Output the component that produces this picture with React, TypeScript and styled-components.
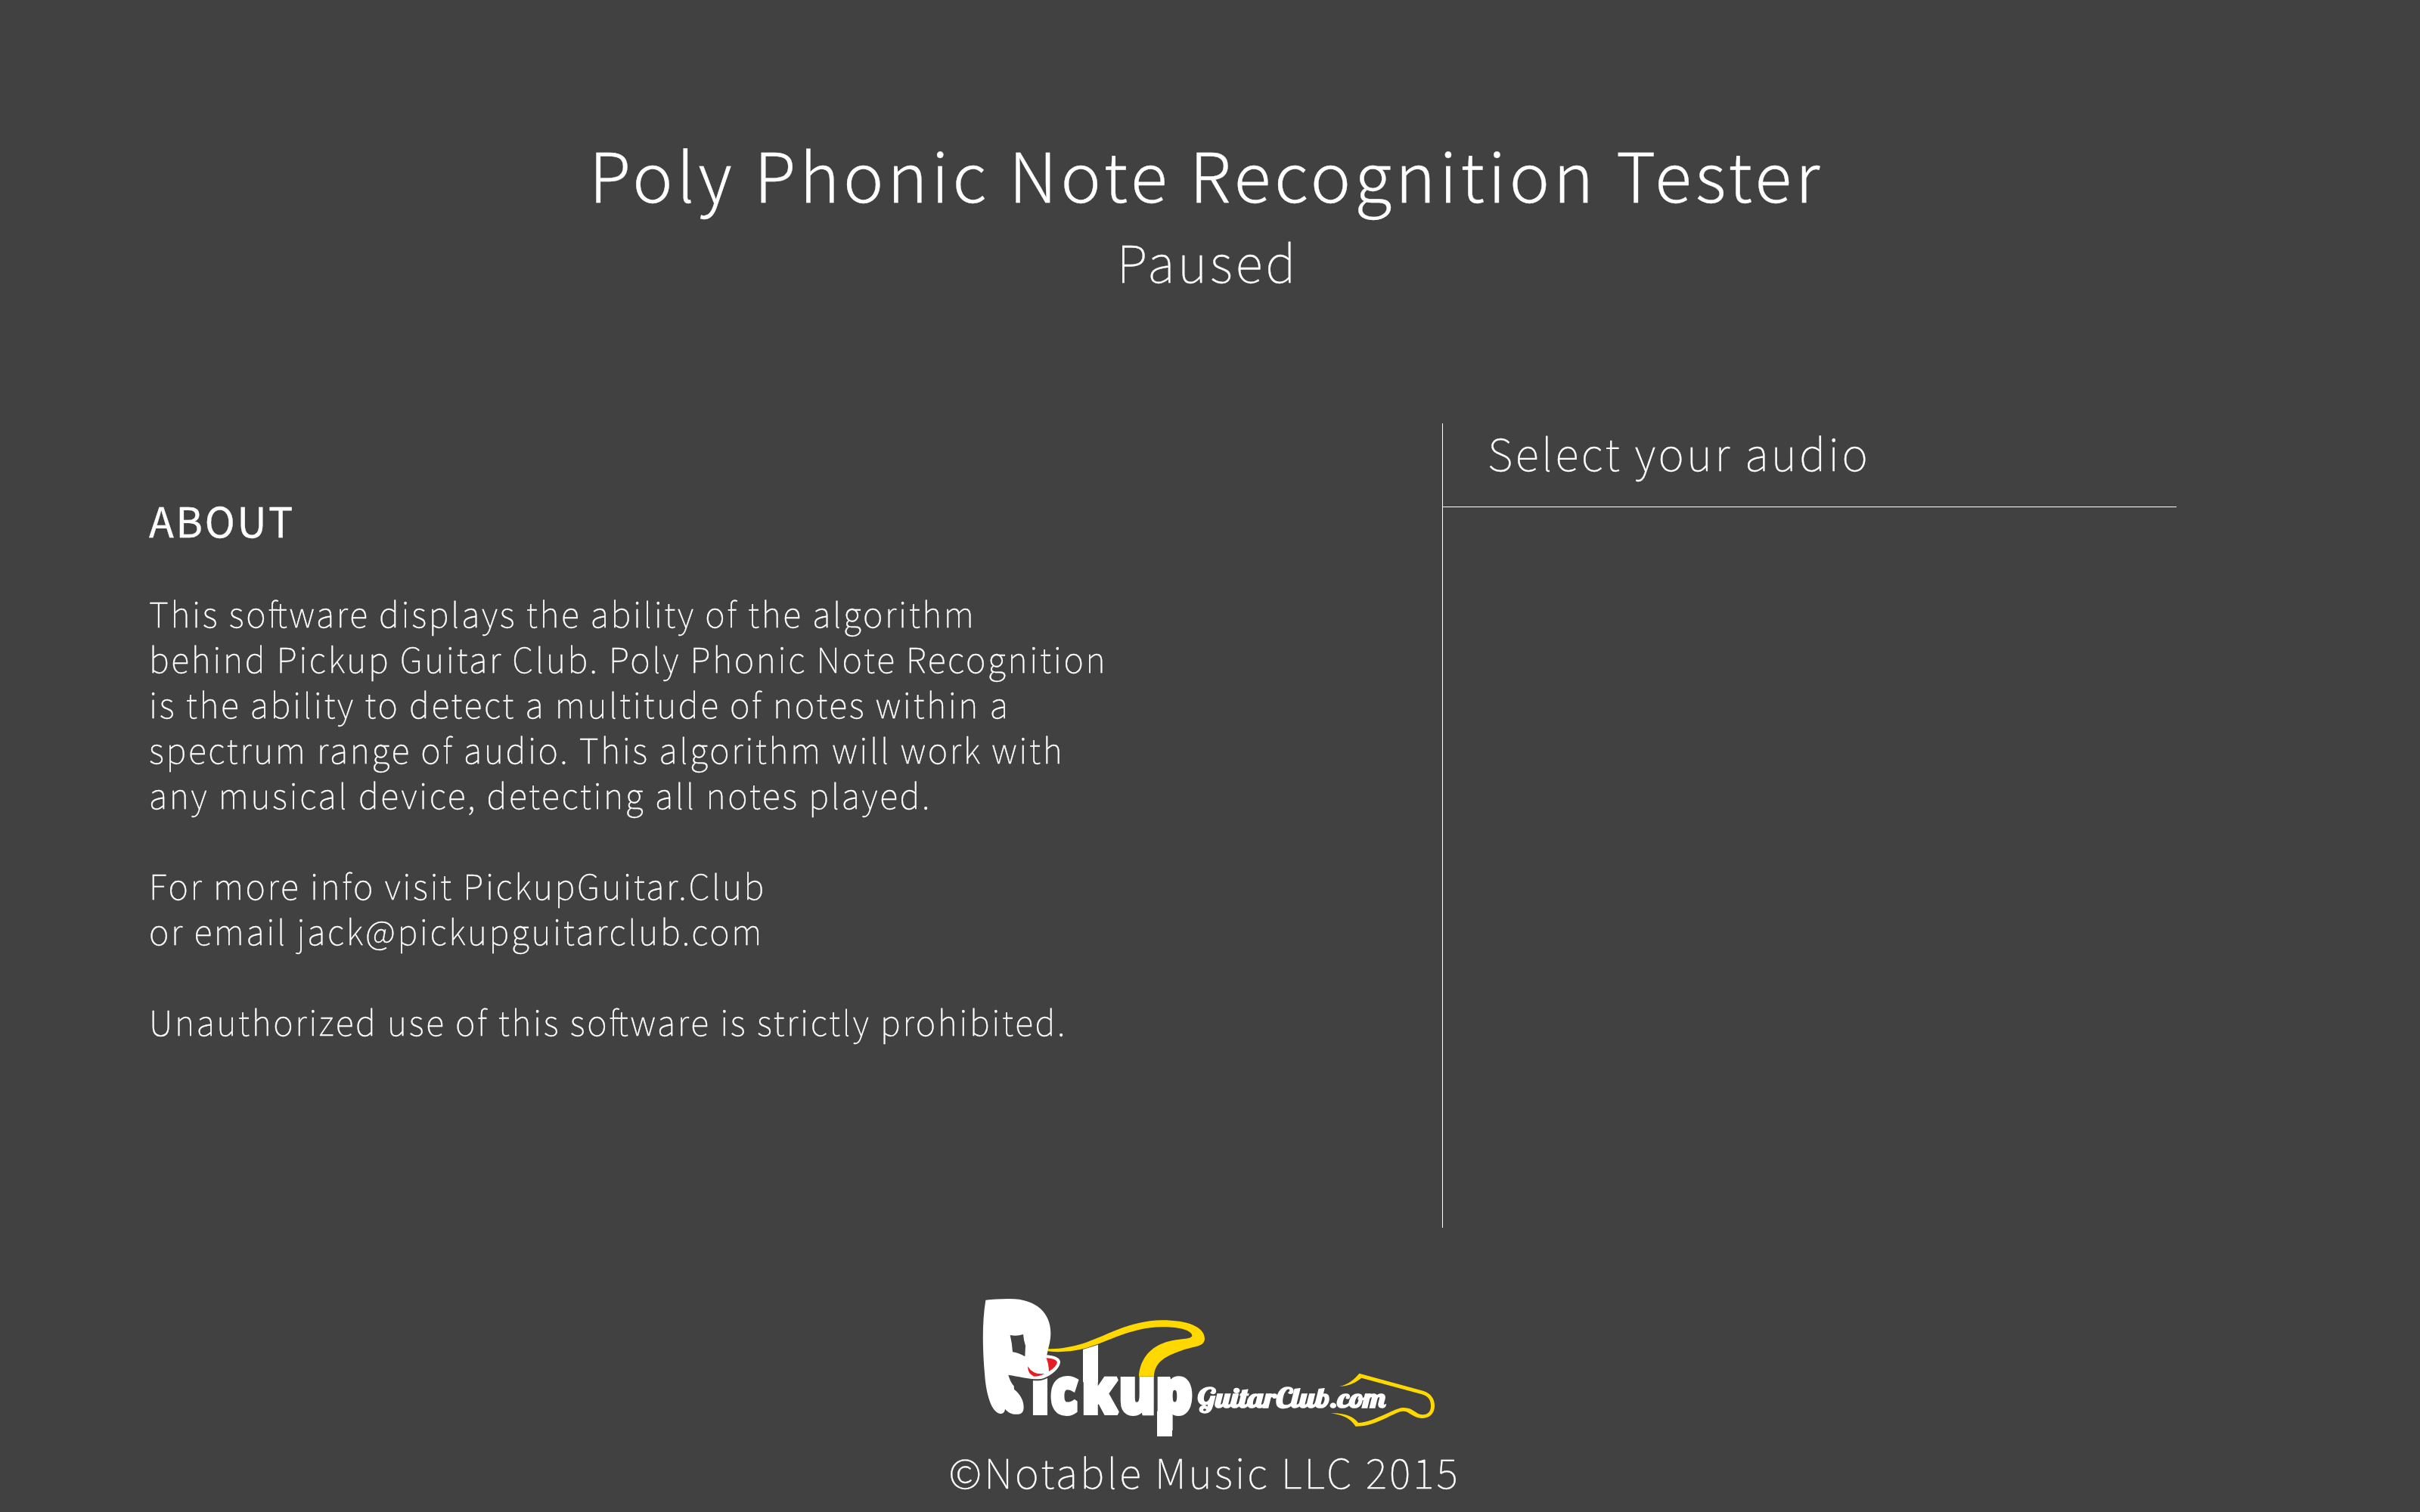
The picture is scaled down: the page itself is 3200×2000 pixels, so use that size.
import React from 'react';
import styled, { createGlobalStyle } from 'styled-components';

const BACKGROUND = '#414141';
const YELLOW = '#ffd800';
const RED = '#e81c24';

const GlobalStyle = createGlobalStyle`
  * { box-sizing: border-box; }
  body {
    margin: 0;
    background: ${BACKGROUND};
    color: #fff;
    font-family: "Noto Sans CJK JP", "Source Sans Pro", "Noto Sans", sans-serif;
  }
`;

const Screen = styled.div`
  width: 3200px;
  height: 2000px;
  display: flex;
  flex-direction: column;
  overflow: hidden;
  will-change: transform;
  -webkit-text-stroke: 0.3px #fff;
`;

const Header = styled.header`
  height: 560px;
  padding-top: 164px;
  display: flex;
  flex-direction: column;
  align-items: center;
`;

const Title = styled.h1`
  margin: 0;
  padding-right: 10px;
  font-size: 90px;
  font-weight: 300;
  line-height: 130px;
  letter-spacing: 4.88px;
  white-space: nowrap;
`;

const Status = styled.div`
  margin-top: 2px;
  padding-right: 6px;
  font-size: 67.5px;
  font-weight: 100;
  line-height: 97px;
  letter-spacing: 3.88px;
`;

const Main = styled.main`
  display: flex;
  height: 1064px;
`;

const About = styled.section`
  width: 1907px;
  padding: 88px 0 0 197px;
`;

const AboutHeading = styled.h2`
  margin: 0 0 54px;
  font-size: 54px;
  font-weight: 400;
  line-height: 79px;
  letter-spacing: 2.67px;
`;

const Paragraph = styled.p`
  margin: 0 0 60px;
  font-size: 45px;
  font-weight: 100;
  line-height: 60px;
  letter-spacing: 2.65px;
  white-space: pre;
`;

const Tight = styled.span`
  letter-spacing: -2px;
`;

const AudioPanel = styled.section`
  width: 971px;
  border-left: 1px solid #fff;
`;

const AudioHeader = styled.div`
  height: 111px;
  padding: 8px 0 0 59px;
  border-bottom: 1px solid #fff;
  font-size: 58.5px;
  font-weight: 100;
  line-height: 60px;
  letter-spacing: 3.48px;
`;

const Footer = styled.footer`
  flex: 1;
  padding-top: 76px;
  display: flex;
  flex-direction: column;
  align-items: center;
`;

const LogoArt = styled.svg`
  display: block;
  width: 640px;
  height: 206px;
  flex: none;
`;

const Wordmark = styled.text`
  font-family: "Noto Sans", "Open Sans", sans-serif;
  font-size: 246px;
  font-weight: 900;
  fill: #fff;
  stroke: #fff;
  stroke-width: 18px;
  stroke-miterlimit: 2;
`;

const Script = styled.text`
  font-family: Lobster, Pacifico, cursive;
  font-size: 107px;
  fill: #fff;
  stroke: #fff;
  stroke-width: 5px;
`;

const Copyright = styled.div`
  padding-right: 15px;
  font-size: 54px;
  font-weight: 100;
  line-height: 79px;
  letter-spacing: 3.15px;
`;

const letters = [
  { ch: 'ı', x: 251, sx: 0.88 },
  { ch: 'c', x: 328, sx: 0.81 },
  { ch: 'k', x: 452, sx: 0.867 },
  { ch: 'u', x: 599, sx: 0.874 },
  { ch: 'p', x: 745.4, sx: 0.918 },
];

function Logo() {
  return (
    <LogoArt viewBox="0 0 1920 618">
      {letters.map(l => (
        <Wordmark key={l.ch} transform={`translate(${l.x} 506) scale(${l.sx} 1)`}>{l.ch}</Wordmark>
      ))}
      {/* neck joint and foot */}
      <path fill="#fff" d="M456 255L516 236V385H456ZM750 500H810V600H750Z" />
      {/* guitar body */}
      <path fill={YELLOW} d="M312 252Q375 256 455 232C540 205 640 140 770 139C870 139 938 165 939 212C938 248 890 240 840 262C775 285 740 310 738 362L678 362C680 300 720 240 800 222C850 211 889 215 889 199C885 178 835 165 770 166C640 168 560 225 455 253Q380 270 316 262Z" />
      {/* mascot */}
      <path fill="#fff" stroke={BACKGROUND} strokeWidth="11" d="M240 372C262 374 272 373 280 373C310 372 345 345 358 325L300 300Z" />
      <path fill="#fff" d="M70 59Q110 54 160 54C270 52 328 110 328 190C328 225 318 250 313 277Q366 282 366 306C362 340 310 372 280 373C235 372 200 362 160 356Q168 385 182 400L183 413C205 430 221 455 221 485C221 512 200 514 185 512C165 510 155 500 147 491C146 505 138 510 128 510C95 505 72 440 66 350C58 260 55 150 70 59Z" />
      <path fill={BACKGROUND} d="M167 198Q195 203 219 195Q221 220 228 240L226 283Q200 268 177 265Q175 230 167 198Z" />
      <path fill={RED} d="M310 289Q345 290 354 305Q350 325 321 342Q320 310 310 289ZM237 322Q255 352 290 352L304 351Q285 362 262 362Q237 352 237 322Z" />
      {/* headstock */}
      <path fill={YELLOW} transform="translate(840 0)" d="M633 401C665 397 695 372 712 350L965 419C1000 430 1012 455 1011 480C1010 515 985 529 958 528C920 524 910 498 885 500C850 502 780 562 697 560C685 540 660 515 598 508C650 505 690 520 708 546C770 545 850 487 885 486C925 484 935 512 962 514C985 515 997 500 996 478C996 455 985 440 960 433L721 368C700 385 670 402 633 401Z" />
      <Script x="911" y="485" textLength="745" lengthAdjust="spacingAndGlyphs">GuitarClub.com</Script>
    </LogoArt>
  );
}

export default function App() {
  return (
    <Screen>
      <GlobalStyle />
      <Header>
        <Title>Poly Phonic Note Recognition Tester</Title>
        <Status>Paused</Status>
      </Header>
      <Main>
        <About>
          <AboutHeading>ABOUT</AboutHeading>
          <Paragraph>
            {'This so'}<Tight>f</Tight>{'tware displays the ability of the algorithm\nbehind Pickup Guitar Club. Poly Phonic Note Recognition\nis the ability to detect a multitude of notes within a\nspectrum range of audio. This algorithm will work with\nany musical device, detecting all notes played.'}
          </Paragraph>
          <Paragraph>{'For more info visit PickupGuitar.Club\nor email jack@pickupguitarclub.com'}</Paragraph>
          <Paragraph>{'Unauthorized use of this so'}<Tight>f</Tight>{'tware is strictly prohibited.'}</Paragraph>
        </About>
        <AudioPanel>
          <AudioHeader>Select your audio</AudioHeader>
        </AudioPanel>
      </Main>
      <Footer>
        <Logo />
        <Copyright>©Notable Music LLC 2015</Copyright>
      </Footer>
    </Screen>
  );
}
